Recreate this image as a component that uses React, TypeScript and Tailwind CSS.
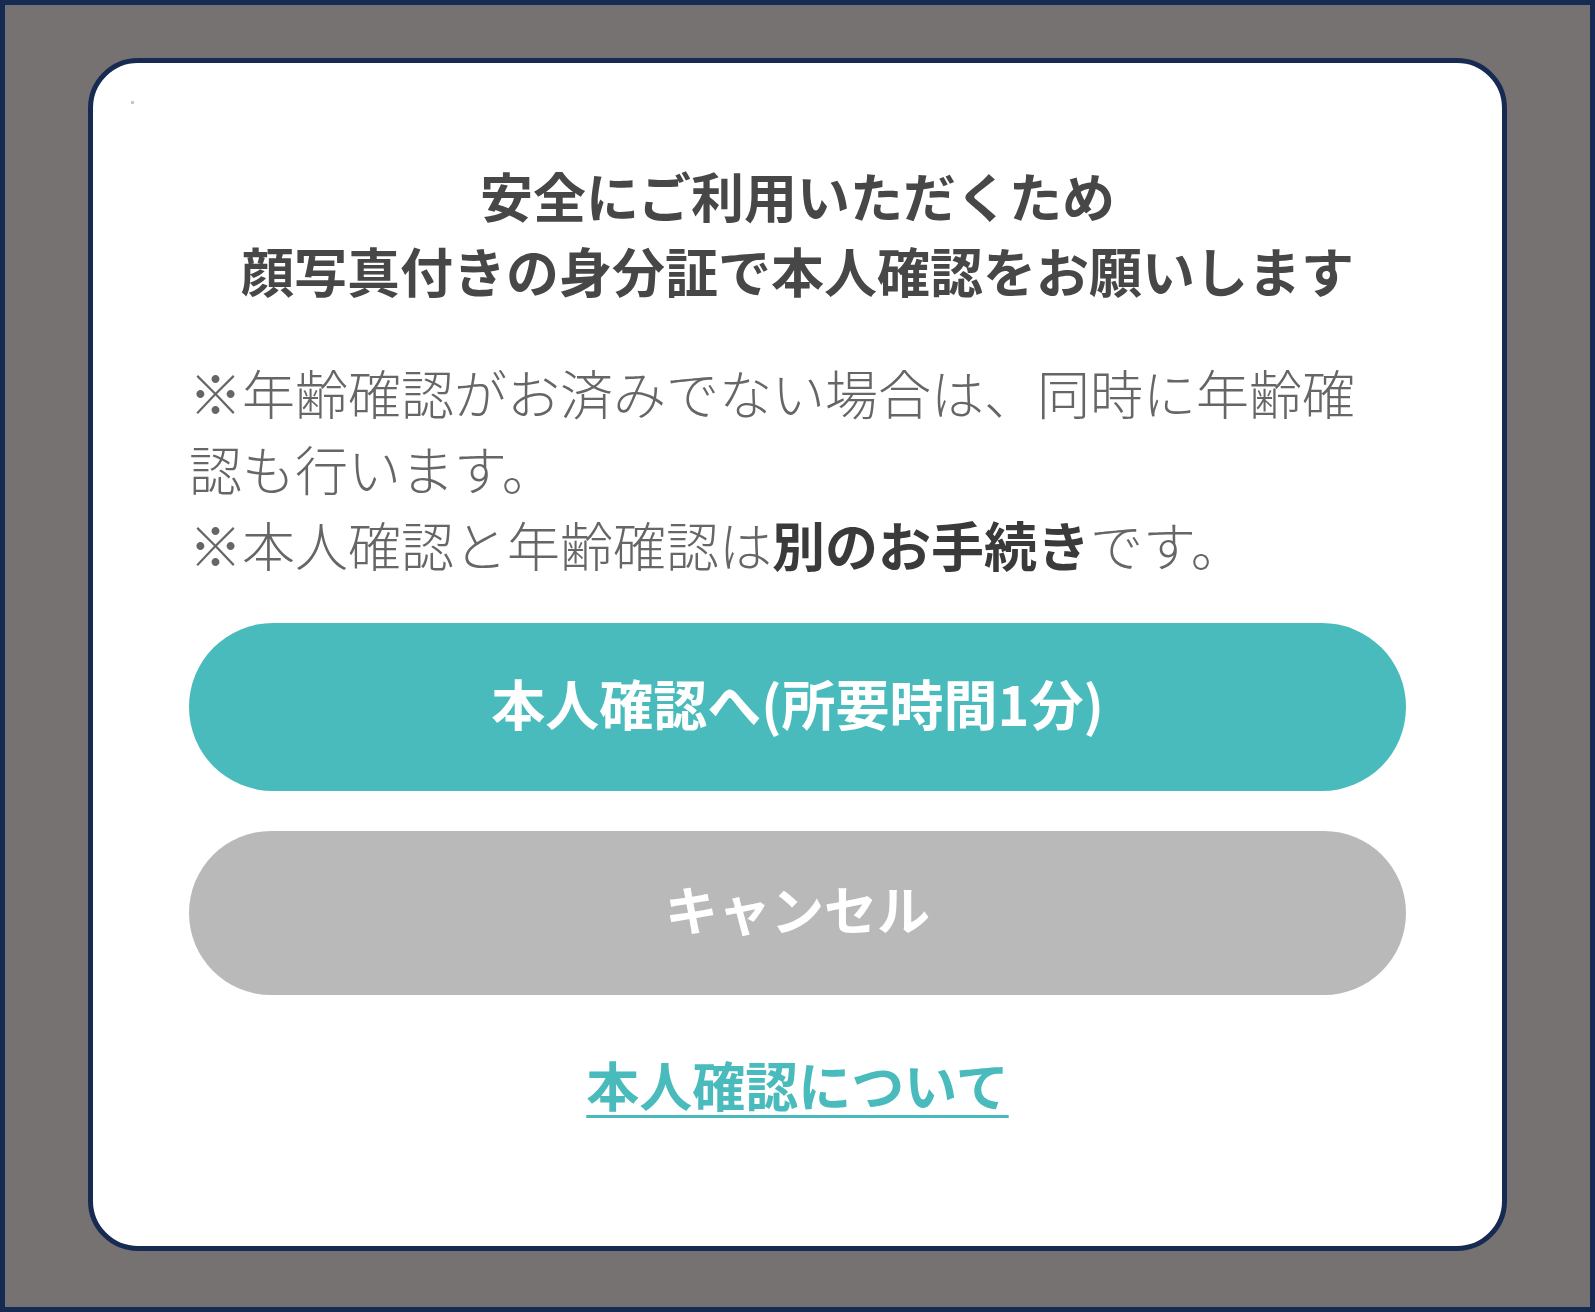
export default function App() {
  const jp = { fontFamily: '"Noto Sans CJK JP", "Noto Sans", sans-serif' }

  return (
    <div
      className="box-border h-[1312px] w-[1595px] border-[5px] border-[#172b52] bg-[#767271] px-[83px] pt-[53px]"
      style={jp}
    >
      <div className="box-border flex h-[1193px] flex-col rounded-[50px] border-[5px] border-[#172b52] bg-white px-[96px]">
        {/* tiny speck top-left */}
        <div className="-ml-[58px] mt-[38px] h-[3px] w-[3px] bg-[#c8c8c8]" />

        <h1 className="mt-[54px] text-center text-[53px] font-bold leading-[75px] text-[#474747]">
          安全にご利用いただくため
          <br />
          顔写真付きの身分証で本人確認をお願いします
        </h1>

        <p className="mt-[46px] text-[53px] font-light leading-[76px] text-[#666666]">
          ※年齢確認がお済みでない場合は、同時に年齢確認も行います。
          <br />
          ※本人確認と年齢確認は<span className="font-bold text-[#3a3a3a]">別のお手続き</span>です。
        </p>

        <div className="mt-[41px] flex flex-col gap-[40px]">
          <button className="flex h-[168px] w-full items-center justify-center rounded-full bg-[#4abbbc] pb-[9px] text-[54px] font-bold text-white">
            本人確認へ(所要時間1分)
          </button>
          <button className="flex h-[164px] w-full items-center justify-center rounded-full bg-[#b9b9b9] pb-[9px] text-[53px] font-bold text-white">
            キャンセル
          </button>
        </div>

        <div className="mt-[54px] flex justify-center">
          <a className="text-[53px] font-bold leading-[70px] text-[#4abbbc] underline decoration-[3px] underline-offset-[8px]">
            本人確認について
          </a>
        </div>
      </div>
    </div>
  )
}
